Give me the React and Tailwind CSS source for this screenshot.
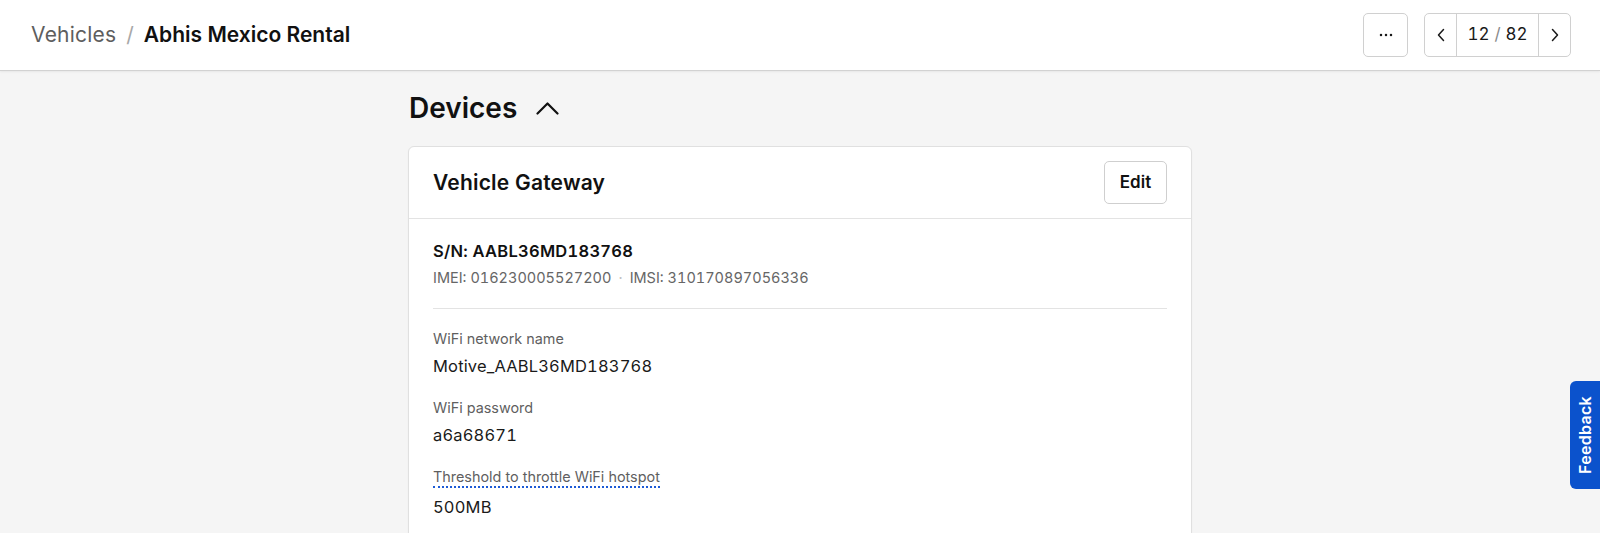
import React from "react";

function Dots() {
  return (
    <svg width="16" height="16" viewBox="0 0 16 16" fill="#1a1a1a">
      <circle cx="3" cy="8" r="1.25" />
      <circle cx="8" cy="8" r="1.25" />
      <circle cx="13" cy="8" r="1.25" />
    </svg>
  );
}

function Chev({ dir }) {
  return (
    <svg width="8" height="14" viewBox="0 0 8 14" fill="none" stroke="#1a1a1a" strokeWidth="1.5" strokeLinecap="round" strokeLinejoin="round">
      {dir === "left" ? <path d="M6.5 1.5 1.5 7l5 5.5" /> : <path d="M1.5 1.5 6.5 7l-5 5.5" />}
    </svg>
  );
}

function Field({ label, value, dotted }) {
  return (
    <div>
      <div className="text-[14.4px] leading-5 text-[#5f5f5f]">
        {dotted ? (
          <span className="border-b-2 border-dotted border-[#1d5bd6] pb-[1px]">{label}</span>
        ) : (
          label
        )}
      </div>
      <div className={(dotted ? "mt-[8px] " : "mt-[5px] ") + "text-[16.5px] leading-6 tabular-nums tracking-[0.01em] text-[#1a1a1a]"}>{value}</div>
    </div>
  );
}

export default function App() {
  return (
    <div
      className="relative h-[533px] w-full overflow-hidden bg-[#f5f5f5]"
      style={{ fontFamily: "Inter, 'Noto Sans', sans-serif" }}
    >
      <header className="flex h-[71px] items-center justify-between border-b border-[#d2d2d2] bg-white pl-[31px] pr-[29px] shadow-[0_1px_2px_rgba(0,0,0,0.06)]">
        <div className="flex items-center text-[21px] leading-7">
          <span className="tracking-[0.01em] text-[#5e5e5e]">Vehicles</span>
          <span className="mx-[10px] text-[#a8a8a8]">/</span>
          <span className="font-semibold text-[#111]">Abhis Mexico Rental</span>
        </div>
        <div className="flex items-center gap-4">
          <button className="flex h-[44px] w-[45px] items-center justify-center rounded-[5px] border border-[#d0d0d0] bg-white">
            <Dots />
          </button>
          <div className="flex h-[44px] items-stretch rounded-[5px] border border-[#d0d0d0] bg-white">
            <button className="flex w-[32px] items-center justify-center border-r border-[#d0d0d0]">
              <Chev dir="left" />
            </button>
            <div className="flex w-[81px] items-center justify-center text-[17px] tabular-nums text-[#1a1a1a]">
              12<span className="mx-[5px] text-[#8a8a8a]">/</span>82
            </div>
            <button className="flex w-[32px] items-center justify-center border-l border-[#d0d0d0]">
              <Chev dir="right" />
            </button>
          </div>
        </div>
      </header>

      <main className="mx-auto w-[784px] pt-[19px]">
        <div className="flex items-center pl-[1px]">
          <h2 className="text-[28px] font-semibold leading-9 text-[#111]">Devices</h2>
          <svg className="ml-[19px] mt-[1px]" width="23" height="13" viewBox="0 0 23 13" fill="none" stroke="#111" strokeWidth="2.2" strokeLinecap="round" strokeLinejoin="round">
            <path d="M1.5 11.5 11.5 1.5l10 10" />
          </svg>
        </div>

        <div className="mt-[20px] rounded-[6px] border border-[#e0e0e0] bg-white shadow-[0_1px_2px_rgba(0,0,0,0.04)]">
          <div className="flex items-center justify-between border-b border-[#e3e3e3] px-6 py-[14px]">
            <h3 className="text-[21px] font-semibold leading-7 tracking-[0.01em] text-[#111]">Vehicle Gateway</h3>
            <button className="flex h-[43px] w-[63px] items-center justify-center rounded-[5px] border border-[#cfcfcf] bg-white text-[17px] font-semibold text-[#111]">
              Edit
            </button>
          </div>
          <div className="px-6 pt-5 pb-16">
            <div className="text-[16.5px] font-semibold leading-6 tabular-nums tracking-[0.015em] text-[#111]">S/N: AABL36MD183768</div>
            <div className="mt-[5px] flex items-center text-[14.5px] leading-5 tabular-nums text-[#666]">
              <span>IMEI: 016230005527200</span>
              <span className="mx-[7px] text-[#c0c0c0]">·</span>
              <span>IMSI: 310170897056336</span>
            </div>
            <div className="my-5 h-px bg-[#e3e3e3]" />
            <div className="flex flex-col gap-5">
              <Field label="WiFi network name" value="Motive_AABL36MD183768" />
              <Field label="WiFi password" value="a6a68671" />
              <Field label="Threshold to throttle WiFi hotspot" value="500MB" dotted />
            </div>
          </div>
        </div>
      </main>

      <div className="absolute right-0 top-[381px] flex h-[108px] w-[30px] items-center justify-center rounded-l-[6px] bg-[#0b52cc]">
        <span className="-rotate-90 whitespace-nowrap text-[16px] font-semibold tracking-[0.02em] text-white">Feedback</span>
      </div>
    </div>
  );
}
